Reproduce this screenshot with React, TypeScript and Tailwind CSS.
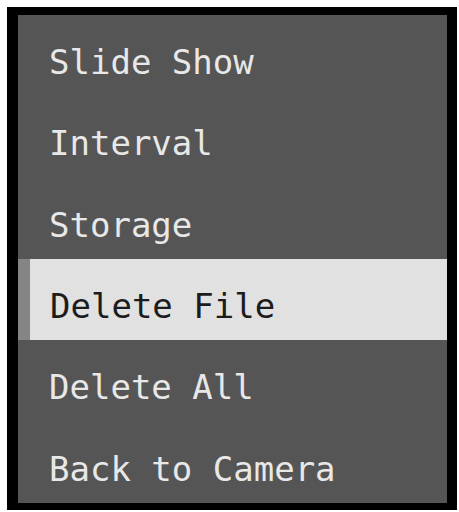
import React from 'react';

const items = ['Slide Show', 'Interval', 'Storage', 'Delete File', 'Delete All', 'Back to Camera'];

const App = () => {
  const selected = 3;

  return (
    <div className="w-[459px] h-[512px] bg-white pl-[7px] pt-[7px]">
      <div className="w-[450px] h-[503px] bg-black border-black border-l-[11px] border-t-[8px] border-r-[10px] border-b-[7px]">
        <div className="h-full bg-[#555555] flex flex-col">
          {items.map((label, i) => (
            <div
              key={label}
              className={
                i === selected
                  ? 'flex-1 flex items-center pt-[13px] pl-[20px] bg-[#e1e1e1] text-[#1c1c1c] border-l-[12px] border-[#858585]'
                  : 'flex-1 flex items-center pt-[13px] pl-[31px] text-[#e8e8e8]'
              }
            >
              <span className="font-['DejaVu_Sans_Mono',monospace] text-[34px] leading-none whitespace-pre">
                {label}
              </span>
            </div>
          ))}
        </div>
      </div>
    </div>
  );
};

export default App;
